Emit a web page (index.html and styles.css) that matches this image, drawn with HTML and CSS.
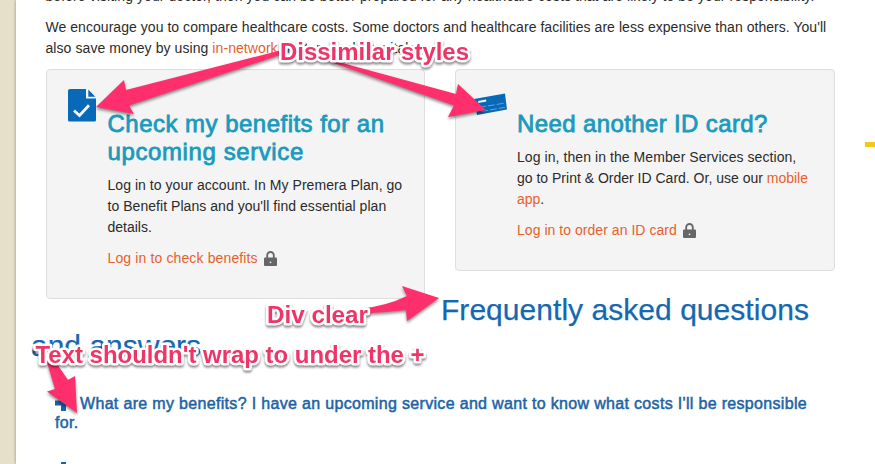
FILE: index.html
```html
<!DOCTYPE html>
<html lang="en">
<head>
<meta charset="utf-8">
<title>Member benefits</title>
<link rel="stylesheet" href="styles.css">
</head>
<body>
<svg class="defs" width="0" height="0">
  <symbol id="lock" viewBox="0 0 13 15"><path d="M3.2 7V4.3a3.3 3.3 0 0 1 6.6 0V7" fill="none" stroke="#666" stroke-width="1.8"/><path d="M1 6.5h11q1 0 1 1V14q0 1-1 1H1q-1 0-1-1V7.500q0-1 1-1z" fill="#666"/><circle cx="6.500" cy="11.300" r=".9" fill="#eee"/></symbol>
  <symbol id="plus" viewBox="0 0 16 16"><path d="M6 0h5v5.500h5v5h-5V16H6v-5.500H0v-5h6z" fill="#1565ae"/></symbol>
</svg>
<main class="page">
  <p class="intro"><span class="l1">before visiting your doctor, then you can be better prepared for any healthcare costs that are likely to be your responsibility.</span></p>
  <p class="intro"><span class="l2">We encourage you to compare healthcare costs. Some doctors and healthcare facilities are less expensive than others. You'll</span><br><span class="l3">also save money by using <a>in-network</a> doctors and hospitals.</span></p>
  <div class="cards">
    <section class="card">
      <svg class="icon doc" width="28" height="33" viewBox="0 0 28 33"><path d="M2 0h16v9.500h10V31q0 1.500-1.500 1.500h-25Q0 32.500 0 31V2Q0 0 2 0z" fill="#0869b8"/><path d="M20.300 .5 27.300 7.800h-7z" fill="#0869b8"/><path d="m6 21.500 5.500 5 9.500-10.300" fill="none" stroke="#f4f4f4" stroke-width="2.800"/></svg>
      <h3><span class="h1">Check my benefits for an</span><br><span class="h2">upcoming service</span></h3>
      <p><span class="a1">Log in to your account. In My Premera Plan, go</span><br><span class="a2">to Benefit Plans and you'll find essential plan</span><br>details.</p>
      <p class="action"><a class="a3">Log in to check benefits</a><svg class="lock" width="13" height="15"><use href="#lock"/></svg></p>
    </section>
    <section class="card">
      <svg class="icon id" width="38" height="24" viewBox="0 0 38 24"><path d="M5 6 36 .5 38 16.500 8 22z" fill="#0869b8"/><path d="m9 8 8-1.500.4 2-8 1.500z" fill="#f4f4f4"/><path d="m10 14.500 26-4.500M12 18.500l24-4.200" stroke="#9bc9ec" stroke-width=".6" stroke-dasharray="7 2"/></svg>
      <h3><span class="h3">Need another ID card?</span></h3>
      <p><span class="b1">Log in, then in the Member Services section,</span><br><span class="b2">go to Print &amp; Order ID Card. Or, use our <a>mobile</a></span><br><a>app</a>.</p>
      <p class="action"><a class="b3">Log in to order an ID card</a><svg class="lock" width="13" height="15"><use href="#lock"/></svg></p>
    </section>
  </div>
  <h2><span class="q1">Frequently asked questions</span><span class="q2">and answers</span></h2>
  <div class="faq">
    <p><svg class="plus" width="16" height="16"><use href="#plus"/></svg><span class="f1">What are my benefits? I have an upcoming service and want to know what costs I'll be responsible</span><br><span class="f1">for.</span></p>
    <p class="next"><svg class="plus" width="16" height="16"><use href="#plus"/></svg></p>
  </div>
</main>
<div class="marker"></div>
<svg class="notes" width="875" height="464" viewBox="0 0 875 464">
  <g class="arrows">
    <path d="M280 50.500 126 90 124 80 96 107 134 114 129 105.500 280 55z"/>
    <path d="M322 59 454 105.500 448 117 486 110 458 84 456 94 335 61z"/>
    <path d="M362 308.500Q386 306 407 296L402 286 439 298 407 321 406 310Q386 312 364 313.500z"/>
    <path d="M47 362 55 389 47 391.500 77 413 75 376 68 380 55 361z"/>
  </g>
  <g class="labels">
    <text x="280" y="59.500" textLength="189" lengthAdjust="spacingAndGlyphs">Dissimilar styles</text>
    <text x="267" y="323" textLength="101" lengthAdjust="spacingAndGlyphs">Div clear</text>
    <text x="35.500" y="363" textLength="389" lengthAdjust="spacingAndGlyphs">Text shouldn't wrap to under the +</text>
  </g>
</svg>
</body>
</html>
```
FILE: styles.css
```css
* { box-sizing: border-box; }
body {
  margin: 0;
  height: 464px;
  overflow: hidden;
  position: relative;
  background: #e6dfca;
  font: 14px/21px "Liberation Sans", Arial, sans-serif;
  color: #2b2b2b;
}
.defs { position: absolute; }
.page {
  margin-left: 16px;
  height: 464px;
  padding-left: 29.5px;
  overflow: hidden;
  background: #fff;
  box-shadow: 0 0 3px rgba(90, 75, 40, .55);
  white-space: nowrap;
}
p { margin: 0 0 10px; }
.intro:first-child { margin-top: -14px; }
a { color: #e8602c; }
.l1, .l3 { letter-spacing: .075px; }
.l2 { letter-spacing: .045px; }
.a1, .a2 { letter-spacing: .045px; }
.a3 { letter-spacing: .13px; }
.b1 { letter-spacing: .07px; }
.b3 { letter-spacing: .04px; }
.cards { display: flex; align-items: flex-start; gap: 30px; }
.card {
  position: relative;
  width: 379.5px;
  padding: 40px 20px 19px 61px;
  background: #f4f4f4;
  border: 1px solid #dedede;
  border-radius: 4px;
}
.icon { position: absolute; }
.doc { left: 21.5px; top: 19px; }
.id { left: 12.5px; top: 23px; }
h3 {
  margin: 0 0 9px;
  font-size: 24px;
  line-height: 28px;
  font-weight: 400;
  color: #1a9abd;
  -webkit-text-stroke: .8px #1a9abd;
}
.h1 { letter-spacing: .48px; }
.h2 { letter-spacing: .6px; }
.h3 { letter-spacing: .38px; }
.lock { margin-left: 6px; vertical-align: -3px; }
h2 {
  margin: -7px 0 0 -14.5px;
  font-size: 30px;
  line-height: 36px;
  font-weight: 400;
  color: #1368b0;
  -webkit-text-stroke: .25px #1368b0;
}
h2 span { display: block; }
.q1 { padding-left: 410px; letter-spacing: .04px; }
.faq {
  padding: 30px 0 0 9.5px;
  font-size: 16px;
  line-height: 19px;
  color: #1c63a5;
  -webkit-text-stroke: .5px #1c63a5;
}
.faq p { margin: 0; }
.faq .next { margin-top: 29px; }
.f1 { letter-spacing: .325px; }
.plus { margin-right: 9px; vertical-align: -2px; }
.marker {
  position: absolute;
  left: 865px;
  top: 142px;
  width: 10px;
  height: 5px;
  background: #f0cb12;
}
.notes { position: absolute; left: 0; top: 0; }
.arrows { fill: #ff2f6d; filter: drop-shadow(0 2px 1.5px rgba(0, 0, 0, .45)); }
.labels {
  font-size: 23px;
  font-weight: 700;
  fill: #ee3568;
  stroke: #fff;
  stroke-width: 5px;
  stroke-linejoin: round;
  paint-order: stroke;
  filter: drop-shadow(0 2px 1px rgba(0, 0, 0, .45));
}
```
